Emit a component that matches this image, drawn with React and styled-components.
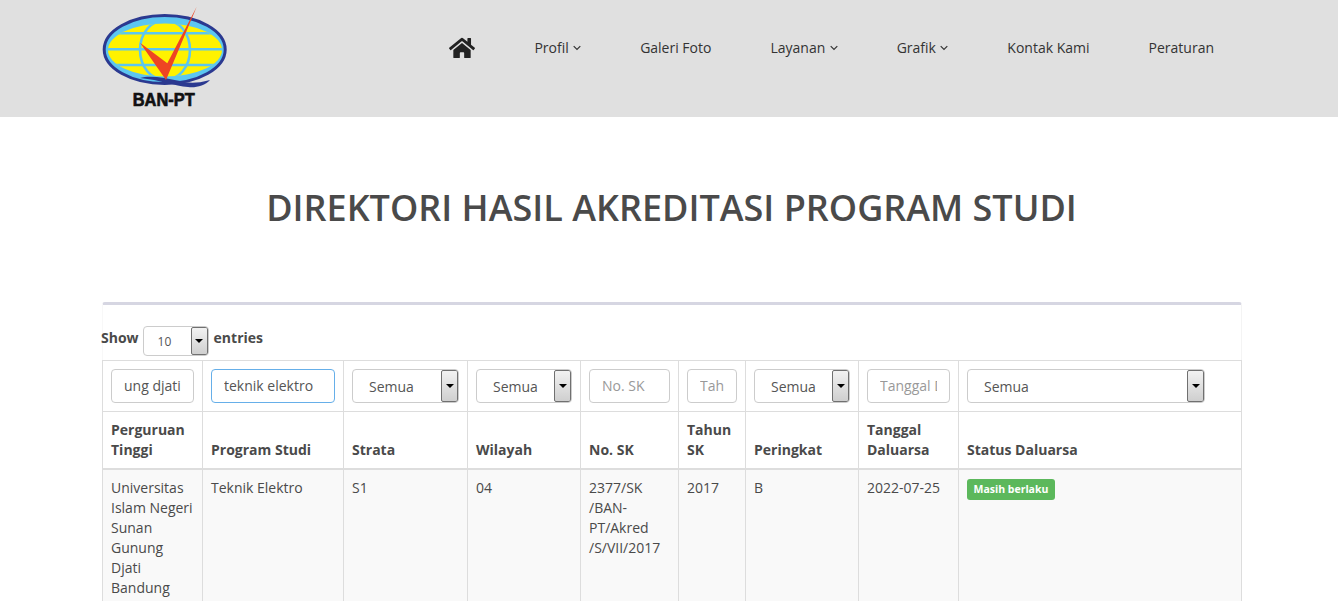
import React from "react";
import styled, { createGlobalStyle } from "styled-components";
import { FaHome } from "react-icons/fa";

const Global = createGlobalStyle`
  html, body { margin: 0; padding: 0; height: 601px; overflow: hidden; background: #fff; }
  body { font-family: "Open Sans", "Liberation Sans", sans-serif; font-size: 14px; color: #4a4a4a; line-height: 20px; }
  * { box-sizing: border-box; }
`;

const Header = styled.header`
  height: 117px;
  background: #e0e0e0;
  padding: 0 0 0 102px;
`;
const HeaderInner = styled.div`
  width: 1140px;
  height: 100%;
  display: flex;
  align-items: center;
  justify-content: space-between;
  padding-right: 28px;
`;
const Logo = styled.svg`
  width: 130px;
  height: 117px;
  flex: none;
`;
const Nav = styled.nav`
  display: flex;
  align-items: center;
  gap: 59px;
  margin-bottom: 22px;
  color: #333;
  font-size: 14px;
`;
const NavItem = styled.span`
  display: inline-flex;
  align-items: center;
  gap: 4.4px;
  white-space: nowrap;
`;
const Chevron = styled.svg`
  width: 8px;
  height: 6px;
  margin-top: 1px;
  flex: none;
`;
const Main = styled.main`
  width: 1140px;
  margin-left: 102px;
`;
const Title = styled.h1`
  margin: 0;
  height: 185px;
  padding: 66px 1px 0 0;
  font-size: 36px;
  line-height: 50px;
  font-weight: 600;
  text-align: center;
  color: #4a4a4a;
`;
const Panel = styled.section`
  border-top: 3px solid #d6d6e2;
  border-radius: 3px 3px 0 0;
  border-right: 1px solid #f4f4f4;
  border-left: 1px solid #f8f8f8;
  padding-top: 21px;
`;
const LengthRow = styled.div`
  display: flex;
  align-items: flex-start;
  gap: 4px;
  height: 34px;
  margin-left: -2px;
  font-weight: 700;
`;
const LengthLabel = styled.span`
  line-height: 20px;
  padding-top: 2px;
`;
const EntriesLabel = styled(LengthLabel)`
  margin-left: 1px;
`;
const Select = styled.div`
  display: flex;
  align-items: center;
  justify-content: space-between;
  width: ${p => p.$w}px;
  height: ${p => p.$h || 34}px;
  flex: none;
  border: 1px solid #ccc;
  border-radius: 4px;
  background: #fff;
  padding-left: ${p => p.$pad || 16}px;
  color: #555;
  font-size: ${p => p.$fs || 14}px;
  font-weight: 400;
  overflow: hidden;
`;
const SelectText = styled.span`
  padding-top: 2px;
`;
const SelectArrow = styled.span`
  width: 17px;
  height: 100%;
  flex: none;
  display: flex;
  align-items: center;
  justify-content: center;
  border: 1px solid #707070;
  border-radius: 2px;
  background: linear-gradient(#f2f2f2, #cfcfcf);
  &::after {
    content: "";
    border-left: 4px solid transparent;
    border-right: 4px solid transparent;
    border-top: 4px solid #000;
  }
`;
const Table = styled.table`
  width: 1139px;
  margin-left: -1px;
  table-layout: fixed;
  border-collapse: collapse;
  color: #4a4a4a;
`;
const Cell = styled.td`
  border: 1px solid #ddd;
  padding: 8px;
  vertical-align: top;
  line-height: 20px;
`;
const FilterCell = styled(Cell)`
  height: 51px;
  vertical-align: middle;
`;
const HeadCell = styled.th`
  border: 1px solid #ddd;
  border-bottom: 2px solid #ddd;
  padding: 8px;
  text-align: left;
  vertical-align: bottom;
  font-weight: 700;
  line-height: 20px;
  height: 57px;
`;
const BodyRow = styled.tr`
  background: #f9f9f9;
`;
const TextFilter = styled.input`
  display: block;
  width: 100%;
  height: 34px;
  border: 1px solid ${p => (p.$focus ? "#66afe9" : "#ccc")};
  border-radius: 4px;
  padding: 5px 12px 7px;
  font: 14px "Open Sans", sans-serif;
  color: #555;
  outline: none;
  background: #fff;
  &::placeholder { color: #999; opacity: 1; }
`;
const Badge = styled.span`
  display: inline-block;
  margin-top: 1px;
  background: #5cb85c;
  color: #fff;
  font-size: 10.5px;
  font-weight: 700;
  line-height: 11px;
  padding: 5px 6.5px;
  border-radius: 3px;
  white-space: nowrap;
`;

const widths = [100, 141, 124, 113, 98, 67, 113, 100, 283];
const heads = ["Perguruan Tinggi", "Program Studi", "Strata", "Wilayah", "No. SK", "Tahun SK", "Peringkat", "Tanggal Daluarsa", "Status Daluarsa"];

const SelectBox = ({ w, children, ...rest }) => (
  <Select $w={w} {...rest}>
    <SelectText>{children}</SelectText>
    <SelectArrow />
  </Select>
);

const Down = () => (
  <Chevron viewBox="0 0 8 6" aria-hidden="true">
    <path d="M.7 1.2 4 4.5l3.3-3.3" fill="none" stroke="currentColor" strokeWidth="1.2" />
  </Chevron>
);

const BanLogo = () => (
  <Logo viewBox="12 0 130 117" role="img" aria-label="BAN-PT">
    <ellipse cx="74.7" cy="49.5" rx="60.5" ry="34" fill="#5cc6f0" stroke="#2b3990" strokeWidth="3" />
    <clipPath id="globe"><ellipse cx="75" cy="50" rx="57" ry="26.5" /></clipPath>
    <g clipPath="url(#globe)">
      <rect x="10" y="15" width="130" height="70" fill="#fff200" />
      <path d="M10 33.3H140M10 49.3H140M10 65H140" stroke="#5cc6f0" strokeWidth="2.6" fill="none" />
      <ellipse cx="75" cy="50" rx="25" ry="30" fill="none" stroke="#5cc6f0" strokeWidth="2.6" />
    </g>
    <path d="M50 78C60 75 75 78 90 81C98 83 105 84 120 80C115 86 105 88 98 87C85 86 70 80 50 78Z" fill="#2b3990" />
    <polygon points="50,42.7 76,80 106.7,6.7 77.3,63.3" fill="#ee4423" />
    <text x="42.7" y="106" fontFamily="Liberation Sans, sans-serif" fontWeight="700" fontSize="19" textLength="62" lengthAdjust="spacingAndGlyphs" fill="#111" stroke="#111" strokeWidth="0.7">BAN-PT</text>
  </Logo>
);

export default function App() {
  return (
    <>
      <Global />
      <Header>
        <HeaderInner>
          <BanLogo />
          <Nav>
            <FaHome size={26} color="#222" />
            <NavItem>Profil<Down /></NavItem>
            <NavItem>Galeri Foto</NavItem>
            <NavItem>Layanan<Down /></NavItem>
            <NavItem>Grafik<Down /></NavItem>
            <NavItem>Kontak Kami</NavItem>
            <NavItem>Peraturan</NavItem>
          </Nav>
        </HeaderInner>
      </Header>
      <Main>
        <Title>DIREKTORI HASIL AKREDITASI PROGRAM STUDI</Title>
        <Panel>
          <LengthRow>
            <LengthLabel>Show</LengthLabel>
            <SelectBox w={66} $h={30} $fs={12} $pad={14}>10</SelectBox>
            <EntriesLabel>entries</EntriesLabel>
          </LengthRow>
          <Table>
            <colgroup>
              {widths.map((w, i) => <col key={i} style={{ width: w }} />)}
            </colgroup>
            <thead>
              <tr>
                <FilterCell><TextFilter defaultValue="ung djati" /></FilterCell>
                <FilterCell><TextFilter $focus defaultValue="teknik elektro" /></FilterCell>
                <FilterCell><SelectBox w={107}>Semua</SelectBox></FilterCell>
                <FilterCell><SelectBox w={96}>Semua</SelectBox></FilterCell>
                <FilterCell><TextFilter placeholder="No. SK" /></FilterCell>
                <FilterCell><TextFilter placeholder="Tahun SK" /></FilterCell>
                <FilterCell><SelectBox w={96}>Semua</SelectBox></FilterCell>
                <FilterCell><TextFilter placeholder="Tanggal Daluarsa" /></FilterCell>
                <FilterCell><SelectBox w={238}>Semua</SelectBox></FilterCell>
              </tr>
              <tr>{heads.map(h => <HeadCell key={h}>{h}</HeadCell>)}</tr>
            </thead>
            <tbody>
              <BodyRow>
                <Cell>Universitas Islam Negeri Sunan Gunung Djati Bandung</Cell>
                <Cell>Teknik Elektro</Cell>
                <Cell>S1</Cell>
                <Cell>04</Cell>
                <Cell>2377/SK<br />/BAN-<br />PT/Akred<br />/S/VII/2017</Cell>
                <Cell>2017</Cell>
                <Cell>B</Cell>
                <Cell>2022-07-25</Cell>
                <Cell><Badge>Masih berlaku</Badge></Cell>
              </BodyRow>
            </tbody>
          </Table>
        </Panel>
      </Main>
    </>
  );
}
